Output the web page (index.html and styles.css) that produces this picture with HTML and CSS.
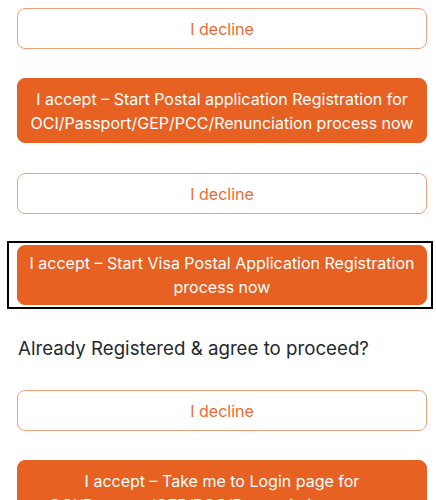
FILE: index.html
```html
<!DOCTYPE html>
<html lang="en">
<head>
<meta charset="utf-8">
<title>Registration</title>
<link rel="stylesheet" href="styles.css">
</head>
<body>
<div class="panel">
  <button class="btn btn-decline">I decline</button>
  <button class="btn btn-accept">I accept – Start Postal application Registration for OCI/Passport/GEP/PCC/Renunciation process now</button>
  <button class="btn btn-decline">I decline</button>
  <div class="focus-ring">
    <button class="btn btn-accept btn-tight">I accept – Start Visa Postal Application Registration process now</button>
  </div>
  <p class="question">Already Registered &amp; agree to proceed?</p>
  <button class="btn btn-decline">I decline</button>
  <button class="btn btn-accept">I accept – Take me to Login page for OCI/Passport/GEP/PCC/Renunciation process</button>
</div>
</body>
</html>
```

FILE: styles.css
```css
html, body {
  margin: 0;
  padding: 0;
  background: #ffffff;
}

body {
  font-family: Inter, "Noto Sans", "Liberation Sans", sans-serif;
  overflow: hidden;
}

.panel {
  display: flex;
  flex-direction: column;
  padding: 8px 9px 0 17px;
}

.btn {
  display: block;
  width: 100%;
  box-sizing: border-box;
  font-family: inherit;
  font-size: 16px;
  line-height: 24px;
  text-align: center;
  border-radius: 8px;
  cursor: pointer;
}

.btn-decline {
  background: #ffffff;
  color: #ec6a33;
  border: 1px solid #f2a07c;
  padding: 7.5px 12px;
  margin-bottom: 29px;
}

.btn-accept {
  background: #e76123;
  color: #ffffff;
  border: 1px solid #e76123;
  padding: 7.5px 10px;
  margin-bottom: 30px;
}

.btn-tight {
  padding: 5px 10px;
  margin-bottom: 0;
}

.focus-ring {
  margin: -2px -6px 0 -10px;
  border: 2px solid #000000;
  padding: 2px 4px 2px 8px;
}

.question {
  margin: 26px 0 28px 1px;
  font-size: 18.7px;
  line-height: 27px;
  color: #24292e;
}
```
